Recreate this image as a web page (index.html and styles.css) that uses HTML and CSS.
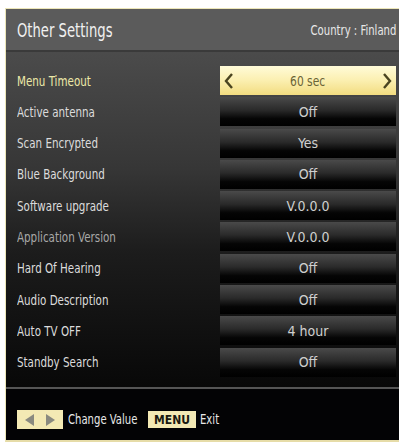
FILE: index.html
```html
<!DOCTYPE html>
<html>
<head>
<meta charset="utf-8">
<link rel="stylesheet" href="styles.css">
</head>
<body>
<div class="panel">
  <div class="header">
    <div class="title">Other Settings</div>
    <div class="country">Country : Finland</div>
  </div>
  <div class="body">
    <div class="row active">
      <div class="label"><span>Menu Timeout</span></div>
      <div class="value sel">
        <svg class="chev" width="10" height="18" viewBox="0 0 10 18"><polyline points="8,2 2,9 8,16" fill="none" stroke="#4a4420" stroke-width="2.4" stroke-linejoin="miter"/></svg>
        <span>60 sec</span>
        <svg class="chev" width="10" height="18" viewBox="0 0 10 18"><polyline points="2,2 8,9 2,16" fill="none" stroke="#4a4420" stroke-width="2.4" stroke-linejoin="miter"/></svg>
      </div>
    </div>
    <div class="row"><div class="label"><span>Active antenna</span></div><div class="value">Off</div></div>
    <div class="row"><div class="label"><span>Scan Encrypted</span></div><div class="value">Yes</div></div>
    <div class="row"><div class="label"><span>Blue Background</span></div><div class="value">Off</div></div>
    <div class="row"><div class="label"><span>Software upgrade</span></div><div class="value">V.0.0.0</div></div>
    <div class="row dim"><div class="label"><span>Application Version</span></div><div class="value">V.0.0.0</div></div>
    <div class="row"><div class="label"><span>Hard Of Hearing</span></div><div class="value">Off</div></div>
    <div class="row"><div class="label"><span>Audio Description</span></div><div class="value">Off</div></div>
    <div class="row"><div class="label"><span>Auto TV OFF</span></div><div class="value">4 hour</div></div>
    <div class="row"><div class="label"><span>Standby Search</span></div><div class="value">Off</div></div>
  </div>
  <div class="footer">
    <div class="key arrows">
      <svg width="34" height="14" viewBox="0 0 34 14"><polygon points="2,7 11,1 11,13" fill="#8a8a80"/><polygon points="32,7 23,1 23,13" fill="#8a8a80"/></svg>
    </div>
    <span class="ftext">Change Value</span>
    <div class="key menu">MENU</div>
    <span class="ftext exit">Exit</span>
  </div>
</div>
</body>
</html>
```
FILE: styles.css
```css
html, body {
  margin: 0;
  padding: 0;
  background: #ffffff;
}
body {
  width: 406px;
  height: 445px;
  font-family: "DejaVu Sans Condensed", "DejaVu Sans", sans-serif;
}
.panel {
  margin: 8px 0 0 5px;
  width: 394px;
  height: 434px;
  border-left: 1px solid #ece6b8;
  border-top: 1px solid #ece6b8;
  border-bottom: 2px solid #e6dca8;
  box-sizing: border-box;
  display: flex;
  flex-direction: column;
  background: #000;
}
.header {
  height: 43px;
  background: #5b5b5b;
  border-bottom: 2px solid #3a3a3a;
  display: flex;
  align-items: center;
  justify-content: space-between;
  padding: 0 3px 0 11px;
  box-sizing: border-box;
  flex: none;
}
.title {
  color: #f0f0f0;
  font-size: 19px;
  transform: scaleX(0.77);
  transform-origin: left center;
  white-space: nowrap;
}
.country {
  color: #e8e8e8;
  font-size: 13.5px;
  transform: scaleX(0.83);
  transform-origin: right center;
  white-space: nowrap;
}
.body {
  flex: none;
  height: 337px;
  padding-top: 14px;
  box-sizing: border-box;
  background: linear-gradient(to bottom, #4b4b4b 0%, #363636 35%, #1c1c1c 60%, #080808 100%);
  border-bottom: 2px solid #555;
  display: flex;
  flex-direction: column;
  gap: 2.3px;
}
.row {
  height: 29px;
  display: flex;
  align-items: center;
  padding-left: 11px;
}
.label {
  width: 203px;
  color: #dcdcdc;
  font-size: 14px;
  white-space: nowrap;
}
.label span {
  display: inline-block;
  transform: scaleX(0.82);
  transform-origin: left center;
}
.row.active .label { color: #ece9a8; }
.row.dim .label { color: #a8a8a8; }
.value {
  width: 176px;
  height: 29px;
  display: flex;
  align-items: center;
  justify-content: center;
  color: #cfcfcf;
  font-size: 14px;
  background: linear-gradient(to bottom, #4a4a4a 0%, #2a2a2a 45%, #050505 75%, #000 100%);
  box-sizing: border-box;
}
.value.sel {
  background: linear-gradient(to bottom, #fffbd8 0%, #fbefb0 50%, #f2dc80 100%);
  color: #6a6436;
  justify-content: space-between;
  padding: 0 4px 0 4px;
}
.value.sel span {
  display: inline-block;
  transform: scaleX(0.85);
}
.chev { display: block; }
.footer {
  flex: 1;
  background: #030305;
  display: flex;
  align-items: flex-start;
  padding: 21px 0 0 11px;
  box-sizing: border-box;
}
.key {
  display: flex;
  align-items: center;
  justify-content: center;
  background: #f3e9b4;
}
.arrows {
  width: 46px;
  height: 19px;
}
.menu {
  width: 48px;
  height: 17px;
  margin-top: 1px;
  font-size: 12px;
  font-weight: bold;
  color: #1a1a10;
  margin-left: 10px;
}
.ftext {
  color: #e8e8e8;
  font-size: 14px;
  line-height: 19px;
  margin-left: 5px;
  display: inline-block;
  transform: scaleX(0.8);
  transform-origin: left center;
  width: 70px;
  white-space: nowrap;
}
.ftext.exit { width: 20px; margin-left: 4px; }
```
